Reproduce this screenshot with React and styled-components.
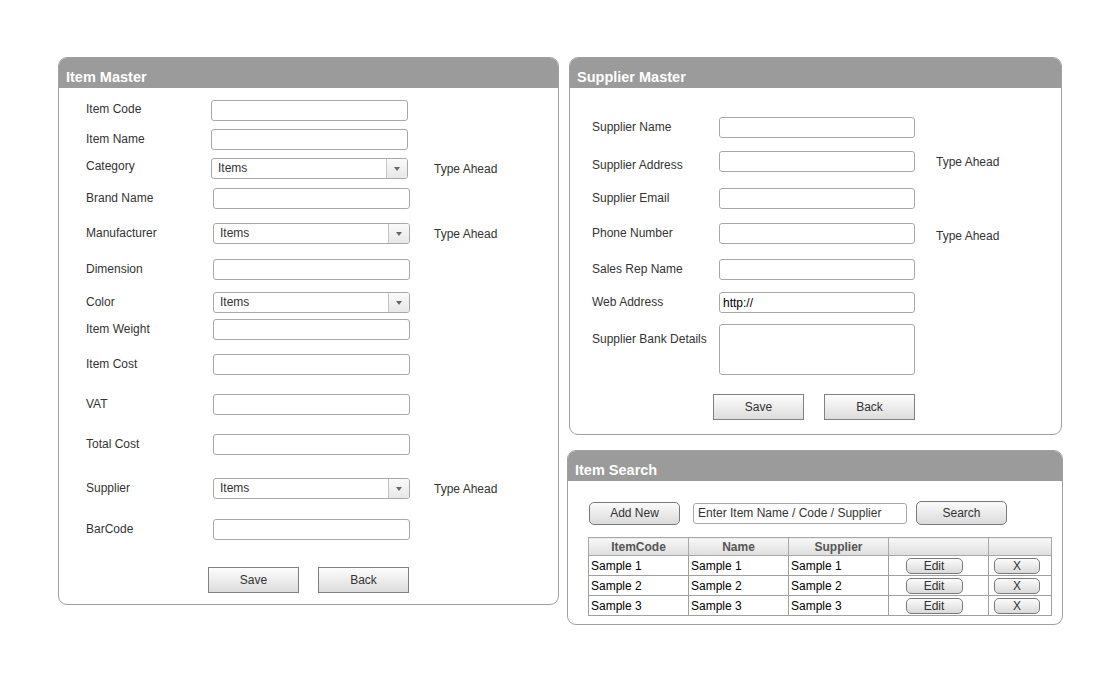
import React from 'react'
import styled, { createGlobalStyle } from 'styled-components'

const itemRows = [
  { label: 'Item Code', gap: 0, dy: -1 },
  { label: 'Item Name', gap: 8 },
  { label: 'Category', gap: 8, select: true, ahead: true, dy: -2 },
  { label: 'Brand Name', gap: 9, shift: 2 },
  { label: 'Manufacturer', gap: 14, select: true, ahead: true, shift: 2 },
  { label: 'Dimension', gap: 15, shift: 2 },
  { label: 'Color', gap: 12, select: true, shift: 2 },
  { label: 'Item Weight', gap: 6, shift: 2 },
  { label: 'Item Cost', gap: 14, shift: 2 },
  { label: 'VAT', gap: 19, shift: 2 },
  { label: 'Total Cost', gap: 19, shift: 2 },
  { label: 'Supplier', gap: 23, select: true, ahead: true, shift: 2 },
  { label: 'BarCode', gap: 20, shift: 2 },
]

const supplierRows = [
  { label: 'Supplier Name', gap: 0 },
  { label: 'Supplier Address', gap: 13, ahead: true, dy: 4 },
  { label: 'Supplier Email', gap: 16 },
  { label: 'Phone Number', gap: 14, ahead: true, aheadDy: 2 },
  { label: 'Sales Rep Name', gap: 15 },
  { label: 'Web Address', gap: 12, value: 'http://' },
  { label: 'Supplier Bank Details', gap: 11, area: true },
]

const samples = ['Sample 1', 'Sample 2', 'Sample 3']

export default () => (
  <>
    <Global />
    <Page>
      <Panel $width={501}>
        <Header>Item Master</Header>
        <Body $top={12} $left={27} $bottom={11}>
          {itemRows.map(r => (
            <Row key={r.label} $gap={r.gap}>
              <Label $w={125 + (r.shift || 0)} $dy={r.dy || 0}>{r.label}</Label>
              {r.select ? (
                <Combo $w={197}>
                  <ComboText>Items</ComboText>
                  <ComboArrow />
                </Combo>
              ) : (
                <Field $w={197} />
              )}
              {r.ahead && <Ahead $ml={26 - (r.shift || 0)}>Type Ahead</Ahead>}
            </Row>
          ))}
          <Buttons $top={27} $left={122} $gap={19}>
            <FlatButton>Save</FlatButton>
            <FlatButton>Back</FlatButton>
          </Buttons>
        </Body>
      </Panel>

      <Side>
        <Panel $width={493} $ml={2}>
          <Header>Supplier Master</Header>
          <Body $top={29} $left={22} $bottom={14}>
            {supplierRows.map(r => (
              <Row key={r.label} $gap={r.gap}>
                <Label $w={127} $dy={r.area ? 5 : r.dy || 0}>{r.label}</Label>
                {r.area ? <Area $w={196} /> : <Field $w={196} defaultValue={r.value || ''} />}
                {r.ahead && <Ahead $ml={21} $dy={r.aheadDy || 0}>Type Ahead</Ahead>}
              </Row>
            ))}
            <Buttons $top={19} $left={121} $gap={20}>
              <FlatButton>Save</FlatButton>
              <FlatButton>Back</FlatButton>
            </Buttons>
          </Body>
        </Panel>

        <Panel $width={496}>
          <Header>Item Search</Header>
          <Body $top={20} $left={20} $bottom={8}>
            <Toolbar>
              <RoundButton $h={23}>Add New</RoundButton>
              <SearchField defaultValue='Enter Item Name / Code / Supplier' />
              <RoundButton $h={24}>Search</RoundButton>
            </Toolbar>
            <Table>
              <colgroup>
                <col style={{ width: 100 }} />
                <col style={{ width: 100 }} />
                <col style={{ width: 100 }} />
                <col style={{ width: 100 }} />
                <col style={{ width: 63 }} />
              </colgroup>
              <thead>
                <tr>
                  <Th>ItemCode</Th>
                  <Th>Name</Th>
                  <Th>Supplier</Th>
                  <Th />
                  <Th />
                </tr>
              </thead>
              <tbody>
                {samples.map(s => (
                  <tr key={s}>
                    <Td>{s}</Td>
                    <Td>{s}</Td>
                    <Td>{s}</Td>
                    <Td $center><SmallButton $w={57} $shift={-9}>Edit</SmallButton></Td>
                    <Td $center><SmallButton $w={46} $shift={-6}>X</SmallButton></Td>
                  </tr>
                ))}
              </tbody>
            </Table>
          </Body>
        </Panel>
      </Side>
    </Page>
  </>
)

const Global = createGlobalStyle`
  body {
    margin: 0;
    background: #fff;
    font-family: 'Liberation Sans', Arial, sans-serif;
    font-size: 12px;
    color: #333;
  }
`

const Page = styled.div`
  display: flex;
  align-items: flex-start;
  gap: 8px;
  padding: 57px 0 0 58px;
`

const Side = styled.div`
  display: flex;
  flex-direction: column;
  gap: 15px;
`

const Panel = styled.section`
  width: ${({ $width }) => $width}px;
  margin-left: ${({ $ml }) => $ml || 0}px;
  box-sizing: border-box;
  border: 1px solid #a0a0a0;
  border-radius: 9px;
  overflow: hidden;
  background: #fff;
`

const Header = styled.h2`
  margin: 0;
  height: 30px;
  line-height: 39px;
  padding-left: 7px;
  overflow: hidden;
  background: #9b9b9b;
  color: #fff;
  font-size: 14.5px;
  font-weight: bold;
`

const Body = styled.div`
  padding: ${({ $top }) => $top}px 0 ${({ $bottom }) => $bottom}px ${({ $left }) => $left}px;
`

const Row = styled.div`
  display: flex;
  align-items: flex-start;
  margin-top: ${({ $gap }) => $gap}px;
`

const Label = styled.div`
  width: ${({ $w }) => $w}px;
  flex: none;
  line-height: 14px;
  margin-top: ${({ $dy }) => 3 + $dy}px;
  color: #333;
`

const Field = styled.input`
  width: ${({ $w }) => $w}px;
  height: 21px;
  box-sizing: border-box;
  border: 1px solid #a8a8a8;
  border-radius: 3px;
  padding: 0 3px;
  margin: 0;
  font: 12px 'Liberation Sans', Arial, sans-serif;
  color: #000;
  background: #fff;
  outline: none;
`

const Area = styled.textarea`
  width: ${({ $w }) => $w}px;
  height: 51px;
  box-sizing: border-box;
  border: 1px solid #a8a8a8;
  border-radius: 3px;
  margin: 0;
  resize: none;
  outline: none;
`

const Combo = styled.div`
  width: ${({ $w }) => $w}px;
  height: 21px;
  box-sizing: border-box;
  border: 1px solid #a8a8a8;
  border-radius: 3px;
  display: flex;
  align-items: stretch;
  background: #fff;
`

const ComboText = styled.span`
  flex: 1;
  padding-left: 6px;
  line-height: 19px;
  color: #333;
`

const ComboArrow = styled.span`
  width: 20px;
  border-left: 1px solid #c4c4c4;
  background: linear-gradient(#fafafa, #e8e8e8);
  display: flex;
  align-items: center;
  justify-content: center;
  border-radius: 0 2px 2px 0;

  &::after {
    content: '';
    border-left: 3px solid transparent;
    border-right: 3px solid transparent;
    border-top: 4px solid #666;
  }
`

const Ahead = styled.span`
  margin-left: ${({ $ml }) => $ml}px;
  margin-top: ${({ $dy }) => 4 + ($dy || 0)}px;
  line-height: 14px;
  color: #333;
`

const Buttons = styled.div`
  display: flex;
  gap: ${({ $gap }) => $gap}px;
  margin-top: ${({ $top }) => $top}px;
  padding-left: ${({ $left }) => $left}px;
`

const FlatButton = styled.button`
  width: 91px;
  height: 26px;
  margin: 0;
  padding: 0;
  border: 1px solid #808080;
  border-radius: 0;
  background: linear-gradient(#fdfdfd, #dcdcdc);
  font: 12px 'Liberation Sans', Arial, sans-serif;
  color: #333;
`

const Toolbar = styled.div`
  display: flex;
  align-items: center;
  padding-left: 1px;
  margin-bottom: 12px;
`

const RoundButton = styled.button`
  width: 91px;
  height: ${({ $h }) => $h}px;
  margin: 0;
  padding: 0;
  border: 1px solid #7a7a7a;
  border-radius: 5px;
  background: linear-gradient(#fbfbfb, #dadada);
  font: 12px 'Liberation Sans', Arial, sans-serif;
  color: #333;
`

const SearchField = styled(Field)`
  width: 214px;
  margin: 0 9px 0 13px;
  padding: 0 4px;
  color: #333;
`

const Table = styled.table`
  border-collapse: collapse;
  table-layout: fixed;
  width: 464px;
  border: 1px solid #a0a0a0;
`

const Th = styled.th`
  height: 17px;
  padding: 0;
  border: 1px solid #a8a8a8;
  background: linear-gradient(#f8f8f8, #dedede);
  font-weight: bold;
  font-size: 12px;
  color: #555;
  text-align: center;
`

const Td = styled.td`
  height: 19px;
  padding: ${({ $center }) => $center ? '0' : '0 0 0 2px'};
  border: 1px solid #a0a0a0;
  color: #000;
  font-size: 12px;
  text-align: ${({ $center }) => $center ? 'center' : 'left'};
  line-height: 14px;
`

const SmallButton = styled.button`
  width: ${({ $w }) => $w}px;
  height: 16px;
  margin: 0 0 0 ${({ $shift }) => $shift}px;
  padding: 0;
  border: 1px solid #7a7a7a;
  border-radius: 5px;
  background: linear-gradient(#fbfbfb, #dadada);
  font: 12px 'Liberation Sans', Arial, sans-serif;
  line-height: 14px;
  color: #333;
  vertical-align: middle;
`
